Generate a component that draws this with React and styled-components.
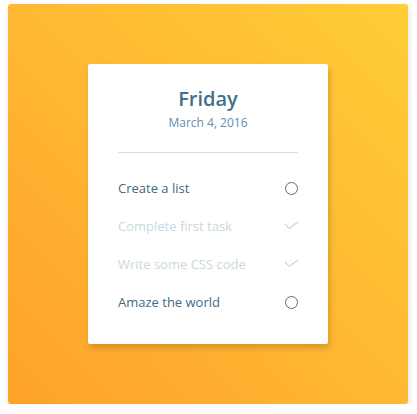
import React from "react";
import styled, { createGlobalStyle } from "styled-components";

const Global = createGlobalStyle`
  html, body { margin: 0; padding: 0; background: #ffffff; }
  body { font-family: "Open Sans", "Noto Sans", sans-serif; }
`;

const Page = styled.div`
  padding: 4px 0 0 8px;
`;

const Frame = styled.div`
  width: 400px;
  height: 400px;
  border-radius: 3px;
  background: linear-gradient(45deg, #ffa22a 0%, #ffb833 50%, #ffcd36 100%);
  box-shadow: 1px 3px 6px rgba(0, 0, 0, 0.12);
  display: flex;
  align-items: center;
  justify-content: center;
`;

const Card = styled.div`
  width: 240px;
  height: 280px;
  box-sizing: border-box;
  padding: 21px 30px 0;
  background: #ffffff;
  border-radius: 2px;
  box-shadow: 2px 4px 6px rgba(0, 0, 0, 0.16);
  display: flex;
  flex-direction: column;
`;

const Header = styled.header`
  display: flex;
  flex-direction: column;
  align-items: center;
  padding-bottom: 21px;
  border-bottom: 1px solid #dddddd;
`;

const Day = styled.h1`
  margin: 0;
  font-size: 20px;
  line-height: 28px;
  font-weight: 600;
  color: #41718d;
`;

const DateLine = styled.div`
  margin-top: 2px;
  font-size: 12px;
  line-height: 16px;
  color: #5f8fae;
`;

const List = styled.ul`
  list-style: none;
  margin: 16px 0 0;
  padding: 0;
`;

const Item = styled.li`
  height: 38px;
  display: flex;
  align-items: center;
  justify-content: space-between;
  font-size: 13px;
  line-height: 18px;
  color: ${(p) => (p.$done ? "#cad7e0" : "#3f6a86")};
`;

const Circle = styled.span`
  width: 13px;
  height: 13px;
  box-sizing: border-box;
  border: 1px solid #4d6f86;
  border-radius: 50%;
`;

const CheckIcon = styled.svg`
  width: 15px;
  height: 9px;
  margin-right: -1px;
  margin-top: -1px;
`;

const Check = () => (
  <CheckIcon viewBox="0 0 15 9">
    <polyline
      points="1,3 5.3,7.3 14.3,0.7"
      fill="none"
      stroke="#c9d6df"
      strokeWidth="1.2"
    />
  </CheckIcon>
);

const tasks = [
  { text: "Create a list", done: false },
  { text: "Complete first task", done: true },
  { text: "Write some CSS code", done: true },
  { text: "Amaze the world", done: false },
];

export default function App() {
  return (
    <Page>
      <Global />
      <Frame>
        <Card>
          <Header>
            <Day>Friday</Day>
            <DateLine>March 4, 2016</DateLine>
          </Header>
          <List>
            {tasks.map((t) => (
              <Item key={t.text} $done={t.done}>
                <span>{t.text}</span>
                {t.done ? <Check /> : <Circle />}
              </Item>
            ))}
          </List>
        </Card>
      </Frame>
    </Page>
  );
}
